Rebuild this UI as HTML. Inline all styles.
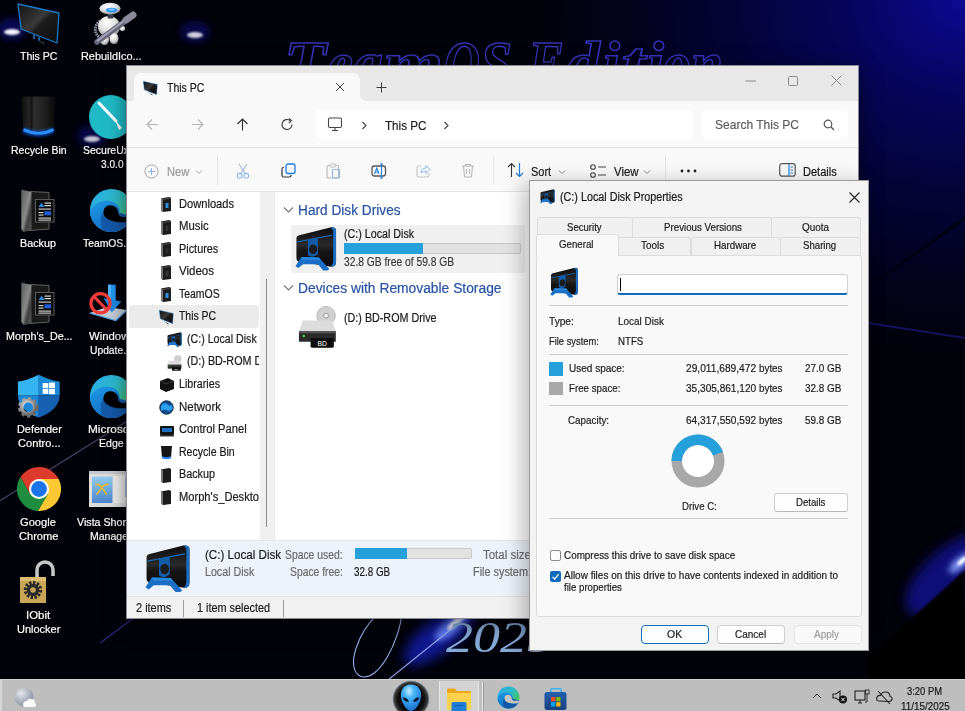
<!DOCTYPE html><html><head><meta charset="utf-8"><style>
*{margin:0;padding:0;box-sizing:border-box}
html,body{width:965px;height:711px;overflow:hidden;background:#02020a}
body{position:relative;font-family:"Liberation Sans",sans-serif}
.t{position:absolute;white-space:nowrap;transform-origin:0 0;-webkit-text-stroke:0.2px currentColor}
.a{position:absolute}
svg{position:absolute;overflow:visible}
.dl{color:#fff;text-shadow:0 0 2px #000,1px 1px 1px #000}
</style></head><body><div class="a" style="left:0;top:0;width:965px;height:711px;background:radial-gradient(ellipse 430px 360px at 965px 0px,#0c0a92 0%,#09077a 12%,#060560 25%,#05044a 40%,#040332 58%,#03021c 78%,rgba(2,2,10,0) 100%),#02020a"></div>
<svg style="left:0px;top:0px;" width="965" height="711" viewBox="0 0 965 711"><defs>
<radialGradient id="glowW" cx="50%" cy="50%" r="50%"><stop offset="0" stop-color="#f4f6ff"/><stop offset=".35" stop-color="#8fa0ff" stop-opacity=".8"/><stop offset="1" stop-color="#1010a0" stop-opacity="0"/></radialGradient>
<radialGradient id="glowB" cx="50%" cy="50%" r="50%"><stop offset="0" stop-color="#ffffff"/><stop offset=".25" stop-color="#6b8cff"/><stop offset=".6" stop-color="#1a2fd0" stop-opacity=".7"/><stop offset="1" stop-color="#0a0a60" stop-opacity="0"/></radialGradient>
</defs><defs><filter id="bl3" x="-1" y="-1" width="3" height="3"><feGaussianBlur stdDeviation="3"/></filter><filter id="bl1" x="-1" y="-1" width="3" height="3"><feGaussianBlur stdDeviation="1.2"/></filter><filter id="bl6" x="-1" y="-1" width="3" height="3"><feGaussianBlur stdDeviation="6"/></filter></defs><ellipse cx="195" cy="32" rx="15" ry="11" fill="#10108c" opacity="0.4675" filter="url(#bl3)"/><ellipse cx="195" cy="35" rx="8" ry="3" fill="#f6f6ff" opacity="0.85" filter="url(#bl1)"/><ellipse cx="12" cy="29" rx="15" ry="11" fill="#10108c" opacity="0.55" filter="url(#bl3)"/><ellipse cx="12" cy="32" rx="8" ry="3" fill="#f6f6ff" opacity="1" filter="url(#bl1)"/><ellipse cx="92" cy="136" rx="15" ry="11" fill="#10108c" opacity="0.44000000000000006" filter="url(#bl3)"/><ellipse cx="92" cy="139" rx="8" ry="3" fill="#f6f6ff" opacity="0.8" filter="url(#bl1)"/><g font-family="Liberation Serif" font-style="italic" font-weight="bold" font-size="64" fill="none" stroke="#3434b4" stroke-width="1.5"><text x="284" y="85" textLength="42" lengthAdjust="spacingAndGlyphs">T</text><text x="327" y="85" textLength="26" lengthAdjust="spacingAndGlyphs">e</text><text x="353" y="85" textLength="30" lengthAdjust="spacingAndGlyphs">a</text><text x="383" y="85" textLength="60" lengthAdjust="spacingAndGlyphs">m</text><text x="444" y="85" textLength="36" lengthAdjust="spacingAndGlyphs">O</text><text x="480" y="85" textLength="32" lengthAdjust="spacingAndGlyphs">S</text><text x="528" y="85" textLength="36" lengthAdjust="spacingAndGlyphs">E</text><text x="566" y="85" textLength="34" lengthAdjust="spacingAndGlyphs">d</text><text x="602" y="85" textLength="18" lengthAdjust="spacingAndGlyphs">i</text><text x="621" y="85" textLength="24" lengthAdjust="spacingAndGlyphs">t</text><text x="646" y="85" textLength="18" lengthAdjust="spacingAndGlyphs">i</text><text x="663" y="85" textLength="28" lengthAdjust="spacingAndGlyphs">o</text><text x="691" y="85" textLength="32" lengthAdjust="spacingAndGlyphs">n</text></g><path d="M0 500.7 L300 313" stroke="#4a4a66" stroke-width="1.2" opacity=".9"/><path d="M100 643 L135 617" stroke="#2a2a80" stroke-width="1.2"/><path d="M868 288 L965 218" stroke="#020214" stroke-width="3"/><path d="M868 323 L965 338" stroke="#1a1670" stroke-width="2" opacity=".8"/><ellipse cx="440" cy="634" rx="45" ry="17" fill="#1424c8" opacity=".7" filter="url(#bl6)" transform="rotate(-40 440 634)"/><ellipse cx="452" cy="626" rx="22" ry="7" fill="#6a88ff" opacity=".9" filter="url(#bl3)" transform="rotate(-40 452 626)"/><ellipse cx="455" cy="623" rx="10" ry="3" fill="#f0f4ff" opacity=".9" filter="url(#bl1)" transform="rotate(-40 455 623)"/><path d="M388 680 L470 614" stroke="#a8b8ff" stroke-width="1.1" opacity=".85"/><path d="M378 614 C 358 632, 345 668, 360 676 C 378 684, 400 640, 402 612" fill="none" stroke="#8fb0e0" stroke-width="1.1"/><text x="446" y="652" font-family="Liberation Serif" font-style="italic" font-size="44" fill="#86aad6" textLength="108" lengthAdjust="spacingAndGlyphs">2025</text><ellipse cx="950" cy="575" rx="55" ry="26" fill="#1616c0" opacity=".6" filter="url(#bl6)" transform="rotate(-42 950 575)"/><ellipse cx="960" cy="563" rx="14" ry="5" fill="#8aa0ff" filter="url(#bl3)" transform="rotate(-42 960 563)"/><ellipse cx="962" cy="561" rx="6" ry="2" fill="#ffffff" filter="url(#bl1)" transform="rotate(-42 962 561)"/><path d="M868 658 L965 570 L965 711 L868 711 Z" fill="#010106" filter="url(#bl1)"/></svg>
<svg style="left:17px;top:3px;" width="44" height="44" viewBox="0 0 44 44"><g transform="scale(1.0)"><defs><linearGradient id="scr173" x1="0" y1="0" x2="1" y2="1"><stop offset="0" stop-color="#111"/><stop offset=".45" stop-color="#3a3a3a"/><stop offset=".55" stop-color="#1c1c1c"/><stop offset="1" stop-color="#0c0c0c"/></linearGradient></defs><path d="M1 1 L42 10 L40 40 L4 26 Z" fill="url(#scr173)" stroke="#1a78c8" stroke-width="1.3" stroke-linejoin="round"/><path d="M17 32 L17 36 M22 34 L22 38" stroke="#1f86cf" stroke-width="1.4"/><path d="M22 38 L28 41" stroke="#222" stroke-width="2"/></g></svg><svg style="left:88px;top:0px;" width="52" height="48" viewBox="0 0 52 48">
<defs><radialGradient id="rw" cx="40%" cy="30%" r="75%"><stop offset="0" stop-color="#ffffff"/><stop offset=".55" stop-color="#dedede"/><stop offset="1" stop-color="#8a8a8a"/></radialGradient></defs>
<path d="M12 21 C6 25 6 33 11 37" stroke="#8a92a0" stroke-width="3" fill="none" stroke-dasharray="1.6 .8"/>
<ellipse cx="21" cy="26.5" rx="11" ry="10.5" fill="url(#rw)"/>
<rect x="19.5" y="14" width="6" height="4.5" rx="1.5" fill="#3a3a48"/>
<ellipse cx="22" cy="8.6" rx="10.6" ry="5.9" fill="url(#rw)"/>
<ellipse cx="23.5" cy="10" rx="5.5" ry="2.3" fill="#1e90ff"/>
<ellipse cx="23.5" cy="9.6" rx="3.5" ry="1.1" fill="#7cc8ff"/>
<circle cx="34.5" cy="28.5" r="2.6" fill="url(#rw)"/>
<ellipse cx="16.5" cy="39.5" rx="4.5" ry="5.5" fill="url(#rw)"/>
<ellipse cx="26" cy="38.5" rx="4.5" ry="5.5" fill="url(#rw)"/>
<path d="M9 42 L44 16" stroke="#66667a" stroke-width="5.5" stroke-linecap="round"/>
<path d="M9 41 L44 15" stroke="#a4a4ba" stroke-width="2"/>
<path d="M38 20 L45 15" stroke="#8a8a9c" stroke-width="7" stroke-linecap="round"/>
</svg><svg style="left:21px;top:96px;" width="36" height="42" viewBox="0 0 36 42">
<defs><linearGradient id="rb" x1="0" x2="1"><stop offset="0" stop-color="#0e0e0e"/><stop offset=".22" stop-color="#262626"/><stop offset=".3" stop-color="#141414"/><stop offset=".36" stop-color="#2e2e2e"/><stop offset=".65" stop-color="#222"/><stop offset="1" stop-color="#080808"/></linearGradient>
<filter id="rbg" x="-.5" y="-2" width="2" height="5"><feGaussianBlur stdDeviation="1.6"/></filter></defs>
<path d="M0.5 0.5 L34.5 0.5 L33 32 Q17.5 40 2 32 Z" fill="url(#rb)"/>
<path d="M2.5 34 Q17.5 41.5 32.5 34" stroke="#1060e0" stroke-width="5" fill="none" filter="url(#rbg)" opacity=".8"/>
<path d="M2.5 33.5 Q17.5 41 32.5 33.5" stroke="#2a90ff" stroke-width="2.6" fill="none"/>
</svg><svg style="left:89px;top:95px;" width="44" height="44" viewBox="0 0 44 44">
<circle cx="22" cy="22" r="22" fill="#1fbac6"/>
<path d="M10 8 L27 26" stroke="#fff" stroke-width="3" stroke-linecap="round"/>
<path d="M26 25 L33 33 L30 35 Z" fill="#fff"/>
</svg><svg style="left:20px;top:189px;" width="36" height="44" viewBox="0 0 36 44">
<defs><linearGradient id="bk189" x1="0" y1="0" x2="1" y2="1"><stop offset="0" stop-color="#5a5a5a"/><stop offset=".5" stop-color="#8a8a8a"/><stop offset=".7" stop-color="#3e3e3e"/><stop offset="1" stop-color="#5c5c5c"/></linearGradient></defs>
<path d="M10 2.5 L29 3.5 L29 40 L10 41.5 Z" fill="#1a1a1a" stroke="#606060" stroke-width="1"/>
<path d="M1.3 0.5 L11.5 3 L11.5 41.5 L3.5 43 L1.3 40 Z" fill="url(#bk189)"/>
<rect x="15.5" y="10.5" width="18.5" height="22.5" fill="#0c0c0c" stroke="#5a5a5a" stroke-width="1"/>
<path d="M18.5 18 L21.5 13.8 L24.5 18 Z" fill="#2d88e6"/>
<rect x="24.5" y="13.5" width="6.5" height="1.2" fill="#d8d8d8"/><rect x="24.5" y="16" width="6.5" height="1.2" fill="#d8d8d8"/>
<rect x="18.5" y="19.5" width="12.5" height="1.2" fill="#c8c8c8"/>
<rect x="18.5" y="23" width="5" height="1.2" fill="#c8c8c8"/><rect x="18.5" y="25.5" width="5" height="1.2" fill="#c8c8c8"/>
<rect x="24.5" y="22.3" width="6.5" height="4" fill="#1f5ad8"/>
<rect x="18.5" y="28.5" width="12.5" height="1.2" fill="#c8c8c8"/><rect x="18.5" y="30.5" width="12.5" height="1.2" fill="#c8c8c8"/>
</svg><svg style="left:20px;top:282px;" width="36" height="44" viewBox="0 0 36 44">
<defs><linearGradient id="bk282" x1="0" y1="0" x2="1" y2="1"><stop offset="0" stop-color="#5a5a5a"/><stop offset=".5" stop-color="#8a8a8a"/><stop offset=".7" stop-color="#3e3e3e"/><stop offset="1" stop-color="#5c5c5c"/></linearGradient></defs>
<path d="M10 2.5 L29 3.5 L29 40 L10 41.5 Z" fill="#1a1a1a" stroke="#606060" stroke-width="1"/>
<path d="M1.3 0.5 L11.5 3 L11.5 41.5 L3.5 43 L1.3 40 Z" fill="url(#bk282)"/>
<rect x="15.5" y="10.5" width="18.5" height="22.5" fill="#0c0c0c" stroke="#5a5a5a" stroke-width="1"/>
<path d="M18.5 18 L21.5 13.8 L24.5 18 Z" fill="#2d88e6"/>
<rect x="24.5" y="13.5" width="6.5" height="1.2" fill="#d8d8d8"/><rect x="24.5" y="16" width="6.5" height="1.2" fill="#d8d8d8"/>
<rect x="18.5" y="19.5" width="12.5" height="1.2" fill="#c8c8c8"/>
<rect x="18.5" y="23" width="5" height="1.2" fill="#c8c8c8"/><rect x="18.5" y="25.5" width="5" height="1.2" fill="#c8c8c8"/>
<rect x="24.5" y="22.3" width="6.5" height="4" fill="#1f5ad8"/>
<rect x="18.5" y="28.5" width="12.5" height="1.2" fill="#c8c8c8"/><rect x="18.5" y="30.5" width="12.5" height="1.2" fill="#c8c8c8"/>
</svg><svg style="left:89px;top:188px;" width="45" height="45" viewBox="0 0 45 45">
<defs>
<linearGradient id="et1187" x1="0" y1="0" x2="1" y2=".7"><stop offset="0" stop-color="#2aa8ec"/><stop offset=".55" stop-color="#2cbcc8"/><stop offset="1" stop-color="#52c746"/></linearGradient>
<linearGradient id="eb1187" x1="0" y1="0" x2=".6" y2="1"><stop offset="0" stop-color="#1f9ae6"/><stop offset="1" stop-color="#0f66c0"/></linearGradient>
<clipPath id="ec1187"><circle cx="24" cy="24" r="23"/></clipPath>
</defs>
<g transform="scale(0.9375)"><g clip-path="url(#ec1187)">
<rect x="0" y="0" width="48" height="48" fill="url(#et1187)"/>
<path d="M0 29 C2 16 16 11 26 15 C32 18 34 24 32 28 L48 31 L48 48 L0 48 Z" fill="url(#eb1187)"/>
<path d="M16 48 C10 38 12 25 21 20 C26 18 31 21 32 26 L48 31 L48 48 Z" fill="#1458a8"/>
<path d="M22.5 18.5 C27.5 18.5 31 22 31 26 C31 29 34 31 38 31 L48 30.5 L48 36 L38 36.5 C26 37 15.5 33 15.5 26 C15.5 21.5 18.5 18.5 22.5 18.5 Z" fill="#000"/>
</g></g></svg><svg style="left:89px;top:374px;" width="45" height="45" viewBox="0 0 45 45">
<defs>
<linearGradient id="et1745" x1="0" y1="0" x2="1" y2=".7"><stop offset="0" stop-color="#2aa8ec"/><stop offset=".55" stop-color="#2cbcc8"/><stop offset="1" stop-color="#52c746"/></linearGradient>
<linearGradient id="eb1745" x1="0" y1="0" x2=".6" y2="1"><stop offset="0" stop-color="#1f9ae6"/><stop offset="1" stop-color="#0f66c0"/></linearGradient>
<clipPath id="ec1745"><circle cx="24" cy="24" r="23"/></clipPath>
</defs>
<g transform="scale(0.9375)"><g clip-path="url(#ec1745)">
<rect x="0" y="0" width="48" height="48" fill="url(#et1745)"/>
<path d="M0 29 C2 16 16 11 26 15 C32 18 34 24 32 28 L48 31 L48 48 L0 48 Z" fill="url(#eb1745)"/>
<path d="M16 48 C10 38 12 25 21 20 C26 18 31 21 32 26 L48 31 L48 48 Z" fill="#1458a8"/>
<path d="M22.5 18.5 C27.5 18.5 31 22 31 26 C31 29 34 31 38 31 L48 30.5 L48 36 L38 36.5 C26 37 15.5 33 15.5 26 C15.5 21.5 18.5 18.5 22.5 18.5 Z" fill="#000"/>
</g></g></svg><svg style="left:88px;top:284px;" width="42" height="40" viewBox="0 0 42 40">
<path d="M1.7 29 L19 23 L39 26 L27.7 36.5 Z" fill="#c2ccd6"/>
<path d="M1.7 29 L27.7 36.5 L39 26" stroke="#5aa8e8" stroke-width="1.3" fill="none"/>
<rect x="20" y="0.7" width="7.7" height="16" fill="#2196f0"/>
<rect x="20" y="0.7" width="3" height="16" fill="#52b4f8"/>
<path d="M15.6 14.2 L33.4 17.6 L23.7 28.4 Z" fill="#1c8ae6"/>
<circle cx="12.5" cy="19.3" r="9.6" fill="none" stroke="#f03a3a" stroke-width="3.2"/>
<path d="M6 12.5 L19 26" stroke="#f03a3a" stroke-width="3.2"/>
</svg><svg style="left:17px;top:373px;" width="46" height="48" viewBox="0 0 46 48">
<defs><clipPath id="shc"><path d="M0.9 8.4 C8 8 14 5 21.8 1.7 C29.5 5 35.5 8 42.7 8.4 L42.7 22 C42.7 33 33 41 21.8 44.6 C10.5 41 0.9 33 0.9 22 Z"/></clipPath>
<radialGradient id="gear" cx="40%" cy="35%" r="70%"><stop offset="0" stop-color="#f4f4f4"/><stop offset=".6" stop-color="#a8a8a8"/><stop offset="1" stop-color="#6a6a6a"/></radialGradient></defs>
<g clip-path="url(#shc)">
<rect x="0" y="0" width="21.8" height="22.6" fill="#34b4f0"/><rect x="21.8" y="0" width="22" height="22.6" fill="#1a8ad8"/>
<rect x="0" y="22.6" width="21.8" height="24" fill="#1e88d8"/><rect x="21.8" y="22.6" width="22" height="24" fill="#1560b0"/>
</g>
<rect x="25.7" y="10" width="5.6" height="5" fill="#fff"/><rect x="32.1" y="9.6" width="5.9" height="5.4" fill="#fff"/>
<rect x="25.7" y="15.8" width="5.6" height="5" fill="#fff"/><rect x="32.1" y="15.8" width="5.9" height="5.4" fill="#fff"/>
<g transform="translate(11.2 34.4)"><circle r="8" fill="none" stroke="url(#gear)" stroke-width="4.5" stroke-dasharray="3 2.3"/><circle r="6.8" fill="none" stroke="url(#gear)" stroke-width="4"/><circle r="3.4" fill="#1e88d8"/></g>
</svg><svg style="left:15.5px;top:466px;" width="46" height="46" viewBox="0 0 46 46"><g transform="scale(0.9583333333333334)"><path d="M24.00 13.50 L44.46 13.50 A23 23 0 0 1 22.86 46.97 L33.09 29.25 L24 24 Z" fill="#fcc934"/><path d="M33.09 29.25 L22.86 46.97 A23 23 0 0 1 4.68 11.53 L14.91 29.25 L24 24 Z" fill="#1e8e3e"/><path d="M14.91 29.25 L4.68 11.53 A23 23 0 0 1 44.46 13.50 L24.00 13.50 L24 24 Z" fill="#db3a2c"/><circle cx="24" cy="24" r="10.5" fill="#fff"/><circle cx="24" cy="24" r="8.3" fill="#1a73e8"/></g></svg><svg style="left:89px;top:471px;" width="40" height="36" viewBox="0 0 40 36">
<defs><linearGradient id="vsb" x1="0" y1="0" x2="0" y2="1"><stop offset="0" stop-color="#92ccf0"/><stop offset="1" stop-color="#4a86cc"/></linearGradient></defs>
<rect x="0" y="0" width="40" height="36" fill="#dcdcdc"/>
<rect x="0" y="0" width="40" height="3" fill="#c4c8cc"/>
<rect x="3" y="5.6" width="20.4" height="26.4" fill="url(#vsb)"/>
<rect x="24.5" y="5" width="12" height="27" fill="#ececec"/>
<rect x="36.5" y="6" width="3" height="20" fill="#5a8ad0"/>
<path d="M6.2 13.4 Q12 13.5 14 18 L17.8 23.6 M19.6 13.4 Q14 13.5 11.8 18 L7.6 23.6" stroke="#e8b830" stroke-width="1.6" fill="none"/>
</svg><svg style="left:19px;top:562px;" width="40" height="42" viewBox="0 0 40 42">
<path d="M18 16 L18 8 A8 8 0 0 1 34 8 L34 14" fill="none" stroke="#c8c8c8" stroke-width="3.5"/>
<rect x="1" y="15" width="26" height="26" fill="#c9a655"/>
<rect x="1" y="15" width="26" height="4" fill="#dcbc6e"/>
<g transform="translate(14 28)"><circle r="7.5" fill="none" stroke="#2a2a2a" stroke-width="3.4" stroke-dasharray="2.4 1.5"/><circle r="6.2" fill="#2a2a2a"/><circle r="2.8" fill="#c9a655"/></g>
</svg>
<div class="t" style="left:20.2px;top:50.0px;font-size:11.5px;line-height:12px;color:#ffffff;transform:scaleX(0.914);text-shadow:0 0 2px #000,1px 1px 1px #000;">This PC</div>
<div class="t" style="left:81.3px;top:50.0px;font-size:11.5px;line-height:12px;color:#ffffff;transform:scaleX(0.948);text-shadow:0 0 2px #000,1px 1px 1px #000;">RebuildIco...</div>
<div class="t" style="left:10.6px;top:143.7px;font-size:11.5px;line-height:12px;color:#ffffff;transform:scaleX(0.917);text-shadow:0 0 2px #000,1px 1px 1px #000;">Recycle Bin</div>
<div class="t" style="left:82.8px;top:143.7px;font-size:11.5px;line-height:12px;color:#ffffff;transform:scaleX(0.911);text-shadow:0 0 2px #000,1px 1px 1px #000;">SecureUx</div>
<div class="t" style="left:100.8px;top:157.8px;font-size:11.5px;line-height:12px;color:#ffffff;transform:scaleX(0.880);text-shadow:0 0 2px #000,1px 1px 1px #000;">3.0.0</div>
<div class="t" style="left:20.3px;top:237.0px;font-size:11.5px;line-height:12px;color:#ffffff;transform:scaleX(0.936);text-shadow:0 0 2px #000,1px 1px 1px #000;">Backup</div>
<div class="t" style="left:82.8px;top:237.0px;font-size:11.5px;line-height:12px;color:#ffffff;transform:scaleX(0.900);text-shadow:0 0 2px #000,1px 1px 1px #000;">TeamOS.:</div>
<div class="t" style="left:5.6px;top:330.0px;font-size:11.5px;line-height:12px;color:#ffffff;transform:scaleX(0.935);text-shadow:0 0 2px #000,1px 1px 1px #000;">Morph's_De...</div>
<div class="t" style="left:88.6px;top:330.0px;font-size:11.5px;line-height:12px;color:#ffffff;transform:scaleX(0.986);text-shadow:0 0 2px #000,1px 1px 1px #000;">Windows</div>
<div class="t" style="left:89.9px;top:344.2px;font-size:11.5px;line-height:12px;color:#ffffff;transform:scaleX(0.894);text-shadow:0 0 2px #000,1px 1px 1px #000;">Update.</div>
<div class="t" style="left:16.5px;top:422.7px;font-size:11.5px;line-height:12px;color:#ffffff;transform:scaleX(0.947);text-shadow:0 0 2px #000,1px 1px 1px #000;">Defender</div>
<div class="t" style="left:17.7px;top:436.8px;font-size:11.5px;line-height:12px;color:#ffffff;transform:scaleX(0.966);text-shadow:0 0 2px #000,1px 1px 1px #000;">Contro...</div>
<div class="t" style="left:87.8px;top:422.7px;font-size:11.5px;line-height:12px;color:#ffffff;transform:scaleX(1.029);text-shadow:0 0 2px #000,1px 1px 1px #000;">Microsoft</div>
<div class="t" style="left:98.7px;top:436.8px;font-size:11.5px;line-height:12px;color:#ffffff;transform:scaleX(0.916);text-shadow:0 0 2px #000,1px 1px 1px #000;">Edge</div>
<div class="t" style="left:20.3px;top:515.8px;font-size:11.5px;line-height:12px;color:#ffffff;transform:scaleX(0.968);text-shadow:0 0 2px #000,1px 1px 1px #000;">Google</div>
<div class="t" style="left:19.1px;top:530.3px;font-size:11.5px;line-height:12px;color:#ffffff;transform:scaleX(0.963);text-shadow:0 0 2px #000,1px 1px 1px #000;">Chrome</div>
<div class="t" style="left:77.2px;top:515.8px;font-size:11.5px;line-height:12px;color:#ffffff;transform:scaleX(0.928);text-shadow:0 0 2px #000,1px 1px 1px #000;">Vista Short</div>
<div class="t" style="left:90.0px;top:530.3px;font-size:11.5px;line-height:12px;color:#ffffff;transform:scaleX(0.914);text-shadow:0 0 2px #000,1px 1px 1px #000;">Manage</div>
<div class="t" style="left:25.9px;top:609.0px;font-size:11.5px;line-height:12px;color:#ffffff;transform:scaleX(0.992);text-shadow:0 0 2px #000,1px 1px 1px #000;">IObit</div>
<div class="t" style="left:16.9px;top:622.5px;font-size:11.5px;line-height:12px;color:#ffffff;transform:scaleX(0.956);text-shadow:0 0 2px #000,1px 1px 1px #000;">Unlocker</div>
<div class="a" style="left:126px;top:65px;width:733px;height:554px;background:#8a8a94;box-shadow:0 4px 18px rgba(0,0,0,.5)"></div><div class="a" style="left:127px;top:66px;width:731px;height:35px;background:#e8e8e8"></div><div class="a" style="left:134px;top:73px;width:226px;height:28px;background:#f9f9f9;border-radius:7px 7px 0 0"></div><div class="a" style="left:127px;top:101px;width:731px;height:47px;background:#f9f9f9"></div><div class="a" style="left:360px;top:94px;width:7px;height:7px;background:#f9f9f9"></div><div class="a" style="left:360px;top:94px;width:7px;height:7px;background:#e8e8e8;border-bottom-left-radius:7px"></div><div class="a" style="left:127px;top:147px;width:731px;height:1px;background:#e3e3e3"></div><div class="a" style="left:127px;top:148px;width:731px;height:44px;background:#f9f9f9"></div><div class="a" style="left:127px;top:191px;width:731px;height:1px;background:#e3e3e3"></div><div class="a" style="left:316px;top:110px;width:377px;height:29px;background:#ffffff;border-radius:5px"></div><div class="a" style="left:701.5px;top:110px;width:146.5px;height:29px;background:#ffffff;border-radius:5px"></div><div class="a" style="left:127px;top:192px;width:133px;height:348px;background:#ffffff"></div><div class="a" style="left:260px;top:192px;width:14px;height:348px;background:#f0f0f0"></div><div class="a" style="left:266px;top:279px;width:1.2px;height:248px;background:#8a8a8a"></div><div class="a" style="left:274px;top:192px;width:584px;height:348px;background:#ffffff"></div><div class="a" style="left:127px;top:540px;width:731px;height:56px;background:#eef2fb;border-top:1px solid #dfe5f0"></div><div class="a" style="left:127px;top:596px;width:731px;height:22px;background:#f1f1f1;border-top:1px solid #e2e2e2"></div><div class="a" style="left:183px;top:600px;width:1px;height:17px;background:#9a9a9a"></div><div class="a" style="left:282.5px;top:600px;width:1px;height:17px;background:#9a9a9a"></div><svg style="left:143px;top:81px;" width="44" height="44" viewBox="0 0 44 44"><g transform="scale(0.34)"><defs><linearGradient id="scr1511" x1="0" y1="0" x2="1" y2="1"><stop offset="0" stop-color="#111"/><stop offset=".45" stop-color="#3a3a3a"/><stop offset=".55" stop-color="#1c1c1c"/><stop offset="1" stop-color="#0c0c0c"/></linearGradient></defs><path d="M1 1 L42 10 L40 40 L4 26 Z" fill="url(#scr1511)" stroke="#1a78c8" stroke-width="1.3" stroke-linejoin="round"/><path d="M17 32 L17 36 M22 34 L22 38" stroke="#1f86cf" stroke-width="1.4"/><path d="M22 38 L28 41" stroke="#222" stroke-width="2"/></g></svg><div class="t" style="left:167.2px;top:81.0px;font-size:12px;line-height:14px;color:#1a1a1a;transform:scaleX(0.874);">This PC</div><svg style="left:335px;top:82px;" width="10" height="10" viewBox="0 0 10 10"><path d="M1 1 L9 9 M9 1 L1 9" stroke="#3c3c3c" stroke-width="1"/></svg><svg style="left:376px;top:82px;" width="11" height="11" viewBox="0 0 11 11"><path d="M5.5 0.5 L5.5 10.5 M0.5 5.5 L10.5 5.5" stroke="#3c3c3c" stroke-width="1"/></svg><svg style="left:745px;top:75px;" width="12" height="12" viewBox="0 0 12 12"><path d="M0.5 6 L11 6" stroke="#8a8a8a" stroke-width="1"/></svg><svg style="left:788px;top:76px;" width="10" height="10" viewBox="0 0 10 10"><rect x="0.5" y="0.5" width="9" height="9" fill="none" stroke="#8a8a8a" stroke-width="1" rx="1"/></svg><svg style="left:831px;top:75px;" width="11" height="11" viewBox="0 0 11 11"><path d="M0.5 0.5 L10.5 10.5 M10.5 0.5 L0.5 10.5" stroke="#8a8a8a" stroke-width="1"/></svg><svg style="left:146px;top:118px;" width="13" height="13" viewBox="0 0 13 13"><path d="M12 6.5 L1 6.5 M6 1.5 L1 6.5 L6 11.5" stroke="#b5b5b5" stroke-width="1.1" fill="none"/></svg><svg style="left:191px;top:118px;" width="13" height="13" viewBox="0 0 13 13"><path d="M1 6.5 L12 6.5 M7 1.5 L12 6.5 L7 11.5" stroke="#b5b5b5" stroke-width="1.1" fill="none"/></svg><svg style="left:235.5px;top:118px;" width="13" height="13" viewBox="0 0 13 13"><path d="M6.5 12.5 L6.5 1 M1.5 6 L6.5 1 L11.5 6" stroke="#2a2a2a" stroke-width="1.1" fill="none"/></svg><svg style="left:281px;top:118px;" width="13" height="13" viewBox="0 0 13 13"><path d="M11 6.5 A5 5 0 1 1 9 2.5" stroke="#3a3a3a" stroke-width="1.1" fill="none"/><path d="M8 0.5 L10.5 2.5 L8 5" stroke="#3a3a3a" stroke-width="1.1" fill="none"/></svg><svg style="left:327px;top:117px;" width="17" height="15" viewBox="0 0 17 15"><rect x="1.5" y="1" width="13" height="9.5" rx="1.5" fill="none" stroke="#444" stroke-width="1.1"/><path d="M5 13.5 L11 13.5 M8 10.5 L8 13.5" stroke="#444" stroke-width="1.1"/></svg><svg style="left:361px;top:121px;" width="7" height="9" viewBox="0 0 7 9"><path d="M1.5 1 L5 4.5 L1.5 8" stroke="#444" stroke-width="1.1" fill="none"/></svg><div class="t" style="left:384.6px;top:117.6px;font-size:13.5px;line-height:15px;color:#1a1a1a;transform:scaleX(0.862);">This PC</div><svg style="left:443px;top:121px;" width="7" height="9" viewBox="0 0 7 9"><path d="M1.5 1 L5 4.5 L1.5 8" stroke="#444" stroke-width="1.1" fill="none"/></svg><div class="t" style="left:715.0px;top:117.3px;font-size:13.5px;line-height:15px;color:#5d5d5d;transform:scaleX(0.891);">Search This PC</div><svg style="left:823px;top:119px;" width="12" height="12" viewBox="0 0 12 12"><circle cx="5" cy="5" r="3.8" fill="none" stroke="#555" stroke-width="1.2"/><path d="M7.8 7.8 L11 11" stroke="#555" stroke-width="1.3"/></svg><svg style="left:143.5px;top:163.5px;" width="15" height="15" viewBox="0 0 15 15"><circle cx="7.5" cy="7.5" r="6.6" fill="none" stroke="#a8a8a8" stroke-width="1"/><path d="M7.5 4 L7.5 11 M4 7.5 L11 7.5" stroke="#8ab6e8" stroke-width="1"/></svg><div class="t" style="left:166.9px;top:164.5px;font-size:12px;line-height:14px;color:#9a9a9a;transform:scaleX(0.921);">New</div><svg style="left:195px;top:169px;" width="8" height="6" viewBox="0 0 8 6"><path d="M1 1.5 L4 4.5 L7 1.5" stroke="#a8a8a8" stroke-width="1" fill="none"/></svg><div class="a" style="left:217px;top:156px;width:1px;height:29px;background:#e3e3e3"></div><svg style="left:235.5px;top:163px;" width="14" height="16" viewBox="0 0 14 16"><path d="M3 1 L9.5 11 M11 1 L4.5 11" stroke="#9ab8dc" stroke-width="1.1"/><circle cx="3.7" cy="12.8" r="2.4" fill="none" stroke="#8cb8ea" stroke-width="1.1"/><circle cx="10.3" cy="12.8" r="2.4" fill="none" stroke="#8cb8ea" stroke-width="1.1"/></svg><svg style="left:280.5px;top:163px;" width="15" height="15" viewBox="0 0 15 15"><path d="M3 4.5 L2.5 4.5 Q1 4.5 1 6 L1 12.5 Q1 14 2.5 14 L8.5 14 Q10 14 10 12.5 L10 12" fill="none" stroke="#333" stroke-width="1.2"/><rect x="5" y="1" width="9" height="9.5" rx="2" fill="none" stroke="#1a7de0" stroke-width="1.3"/></svg><svg style="left:325.5px;top:162.5px;" width="15" height="16" viewBox="0 0 15 16"><path d="M4 2.5 L2.5 2.5 Q1 2.5 1 4 L1 14 Q1 15 2.5 15 L11 15 Q12.5 15 12.5 14 L12.5 4 Q12.5 2.5 11 2.5 L9.5 2.5" fill="none" stroke="#b8b8b8" stroke-width="1.1"/><rect x="4" y="1" width="5.5" height="3" rx="1" fill="none" stroke="#b8b8b8"/><rect x="6.5" y="6.5" width="7" height="8.5" rx="1" fill="none" stroke="#8ab8e8" stroke-width="1.1"/></svg><svg style="left:370.5px;top:162.5px;" width="16" height="16" viewBox="0 0 16 16"><rect x="1" y="3" width="13.5" height="10" rx="2.5" fill="none" stroke="#555" stroke-width="1.3"/><path d="M3.5 11 L5.8 5 L8 11 M4.3 9 L7.3 9" stroke="#1f7fdc" stroke-width="1.1" fill="none"/><path d="M10.5 1 L10.5 15 M9 1 L12 1 M9 15 L12 15" stroke="#1f7fdc" stroke-width="1.1"/></svg><svg style="left:415.5px;top:163px;" width="15" height="15" viewBox="0 0 15 15"><path d="M5 3 L3 3 Q1 3 1 5 L1 12 Q1 14 3 14 L11 14 Q13 14 13 12 L13 10" fill="none" stroke="#c4c4c4" stroke-width="1.1"/><path d="M5 10 Q5 5 10 5 L10 2.5 L14 6.5 L10 10.5 L10 8 Q7 8 5 10 Z" fill="none" stroke="#8ab8e8" stroke-width="1"/></svg><svg style="left:461px;top:163px;" width="14" height="15" viewBox="0 0 14 15"><path d="M1 3 L13 3 M4.5 3 L4.5 1.5 L9.5 1.5 L9.5 3 M2.5 3 L3.5 13.5 Q3.5 14 4.5 14 L9.5 14 Q10.5 14 10.5 13.5 L11.5 3 M5.5 6 L5.5 11 M8.5 6 L8.5 11" fill="none" stroke="#b8b8b8" stroke-width="1.1"/></svg><div class="a" style="left:492.5px;top:156px;width:1px;height:29px;background:#e3e3e3"></div><svg style="left:507px;top:162px;" width="18" height="16" viewBox="0 0 18 16"><path d="M4.5 15 L4.5 1.5 M1 5 L4.5 1.5 L8 5" stroke="#333" stroke-width="1.1" fill="none"/><path d="M12.5 1 L12.5 14.5 M9 11 L12.5 14.5 L16 11" stroke="#1f7fdc" stroke-width="1.2" fill="none"/></svg><div class="t" style="left:531.3px;top:164.5px;font-size:12px;line-height:14px;color:#1a1a1a;transform:scaleX(0.913);">Sort</div><svg style="left:557.5px;top:169px;" width="8" height="6" viewBox="0 0 8 6"><path d="M1 1.5 L4 4.5 L7 1.5" stroke="#888" stroke-width="1" fill="none"/></svg><svg style="left:590px;top:164px;" width="17" height="14" viewBox="0 0 17 14"><circle cx="3" cy="3" r="2.3" fill="none" stroke="#444" stroke-width="1.1"/><circle cx="3" cy="11" r="2.3" fill="none" stroke="#444" stroke-width="1.1"/><path d="M8 3 L16 3 M8 11 L16 11" stroke="#444" stroke-width="1.1"/></svg><div class="t" style="left:613.5px;top:164.5px;font-size:12px;line-height:14px;color:#1a1a1a;transform:scaleX(0.950);">View</div><svg style="left:643px;top:169px;" width="8" height="6" viewBox="0 0 8 6"><path d="M1 1.5 L4 4.5 L7 1.5" stroke="#888" stroke-width="1" fill="none"/></svg><div class="a" style="left:665px;top:156px;width:1px;height:29px;background:#e3e3e3"></div><svg style="left:680px;top:169px;" width="18" height="4" viewBox="0 0 18 4"><circle cx="2" cy="2" r="1.4" fill="#222"/><circle cx="8.5" cy="2" r="1.4" fill="#222"/><circle cx="15" cy="2" r="1.4" fill="#222"/></svg><svg style="left:779px;top:163px;" width="17" height="14" viewBox="0 0 17 14"><rect x="0.7" y="0.7" width="15.5" height="12.5" rx="2.5" fill="none" stroke="#555" stroke-width="1.2"/><path d="M10 0.7 L10 13.2" stroke="#1f7fdc" stroke-width="1.2"/><path d="M11.5 4 L14 4 M11.5 7 L14 7 M11.5 10 L14 10" stroke="#1f7fdc" stroke-width="1"/></svg><div class="t" style="left:803.0px;top:164.5px;font-size:12px;line-height:14px;color:#1a1a1a;transform:scaleX(0.919);">Details</div><div class="a" style="left:129px;top:305px;width:130px;height:22.8px;background:#ebebeb;border-radius:3px"></div><svg style="left:160px;top:197.0px;" width="12" height="15" viewBox="0 0 12 15">
<path d="M1 1.5 L9 0 L11 1 L11 14 L3 15 L1 13.5 Z" fill="#1c1c1c"/>
<path d="M1 1.5 L3 2.5 L3 15 L1 13.5 Z" fill="#777"/>
<path d="M3 2.5 L11 1" stroke="#555" stroke-width=".8"/>
<rect x="5.5" y="6" width="3" height="5" fill="#2d8de0"/>
</svg><svg style="left:160px;top:219.55px;" width="12" height="15" viewBox="0 0 12 15">
<path d="M1 1.5 L9 0 L11 1 L11 14 L3 15 L1 13.5 Z" fill="#1c1c1c"/>
<path d="M1 1.5 L3 2.5 L3 15 L1 13.5 Z" fill="#777"/>
<path d="M3 2.5 L11 1" stroke="#555" stroke-width=".8"/>
<rect x="5.5" y="6" width="3" height="5" fill="#333"/>
</svg><svg style="left:160px;top:242.1px;" width="12" height="15" viewBox="0 0 12 15">
<path d="M1 1.5 L9 0 L11 1 L11 14 L3 15 L1 13.5 Z" fill="#1c1c1c"/>
<path d="M1 1.5 L3 2.5 L3 15 L1 13.5 Z" fill="#777"/>
<path d="M3 2.5 L11 1" stroke="#555" stroke-width=".8"/>
<rect x="5.5" y="6" width="3" height="5" fill="#2a2a2a"/>
</svg><svg style="left:160px;top:264.65px;" width="12" height="15" viewBox="0 0 12 15">
<path d="M1 1.5 L9 0 L11 1 L11 14 L3 15 L1 13.5 Z" fill="#1c1c1c"/>
<path d="M1 1.5 L3 2.5 L3 15 L1 13.5 Z" fill="#777"/>
<path d="M3 2.5 L11 1" stroke="#555" stroke-width=".8"/>
<rect x="5.5" y="6" width="3" height="5" fill="#333"/>
</svg><svg style="left:160px;top:287.2px;" width="12" height="15" viewBox="0 0 12 15">
<path d="M1 1.5 L9 0 L11 1 L11 14 L3 15 L1 13.5 Z" fill="#1c1c1c"/>
<path d="M1 1.5 L3 2.5 L3 15 L1 13.5 Z" fill="#777"/>
<path d="M3 2.5 L11 1" stroke="#555" stroke-width=".8"/>
<rect x="5.5" y="6" width="3" height="5" fill="#2d8de0"/>
</svg><svg style="left:159px;top:310.25px;" width="44" height="44" viewBox="0 0 44 44"><g transform="scale(0.34)"><defs><linearGradient id="scr1900" x1="0" y1="0" x2="1" y2="1"><stop offset="0" stop-color="#111"/><stop offset=".45" stop-color="#3a3a3a"/><stop offset=".55" stop-color="#1c1c1c"/><stop offset="1" stop-color="#0c0c0c"/></linearGradient></defs><path d="M1 1 L42 10 L40 40 L4 26 Z" fill="url(#scr1900)" stroke="#1a78c8" stroke-width="1.3" stroke-linejoin="round"/><path d="M17 32 L17 36 M22 34 L22 38" stroke="#1f86cf" stroke-width="1.4"/><path d="M22 38 L28 41" stroke="#222" stroke-width="2"/></g></svg><svg style="left:166.5px;top:332.3px;" width="15" height="15" viewBox="0 0 15 15">
<g transform="scale(0.3409090909090909 0.32608695652173914)">
<defs><linearGradient id="dv2825" x1="0" y1="0" x2="0" y2="1"><stop offset="0" stop-color="#0c0c0c"/><stop offset=".45" stop-color="#2a2a2a"/><stop offset=".6" stop-color="#161616"/><stop offset="1" stop-color="#0a0a0a"/></linearGradient></defs>
<path d="M1.5 13 Q1.5 10 4.5 9.5 L37 1.5 Q43 0.5 43 5 L43 37 Q43 42.5 37.5 42 L5 37 Q1.5 36.5 1.5 33 Z" fill="url(#dv2825)"/>
<path d="M36.5 1.7 Q43 0.5 43 5 L43 37 Q43 42.5 37 42 Q40 40 40 36 L40 6 Q40 2.5 36.5 1.7 Z" fill="#1a6fc4"/>
<path d="M1.8 16.5 L38.5 9.5" stroke="#1a6fc4" stroke-width="1.1"/>
<path d="M13.5 14.2 L24 12.2 L24 29 Q19 34 13.5 30 Z" fill="#145ca8"/>
<ellipse cx="19" cy="24" rx="4.2" ry="5" fill="#1c1c1c"/>
<path d="M0.5 41.5 L6.5 32 L25 32.5 L36 44.5 L34 46 L29.5 46 L24 39.5 L8.5 39.5 L3.5 43.5 Z" fill="#1a6ec6"/><path d="M6.5 32 L25 32.5 L27 35 L8 35 Z" fill="#2a8ae0"/>
</g></svg><svg style="left:167px;top:354.85px;" width="42" height="44" viewBox="0 0 42 44"><g transform="scale(0.36)">
<circle cx="30" cy="11" r="9.5" fill="#d0d0d0" stroke="#b8b8b8"/><circle cx="30" cy="11" r="2.5" fill="#f4f4f4" stroke="#999"/>
<path d="M6 16 L36 16 L40 27 L2 27 Z" fill="#dcdcdc"/>
<path d="M2 27 L40 27 L40 38 L2 38 Z" fill="#2a2a2a"/>
<path d="M2 27 L40 27 L40 29 L2 29 Z" fill="#555"/>
<circle cx="7" cy="32" r="1.3" fill="#3ce03c"/>
<rect x="14" y="34" width="24" height="10" rx="1.5" fill="#0d0d0d"/>
<text x="26" y="42" font-family="Liberation Sans" font-size="7" fill="#fff" text-anchor="middle">BD</text>
</g></svg><svg style="left:158.5px;top:377.4px;" width="16" height="15" viewBox="0 0 16 15"><path d="M1 4 L9 1 L15 4 L15 12 L7 15 L1 12 Z" fill="#111"/><path d="M1 4 L7 7 L15 4" stroke="#444" fill="none" stroke-width=".8"/></svg><svg style="left:159px;top:399.95000000000005px;" width="15" height="15" viewBox="0 0 15 15"><circle cx="7.5" cy="7.5" r="6.8" fill="#0e4d90"/><path d="M2 6 Q5 2 8 4 Q10 7 13 5 L14 9 Q10 12 7 10 Q4 9 2 11 Z" fill="#2aa0f0"/><circle cx="7.5" cy="7.5" r="6.8" fill="none" stroke="#123" stroke-width=".8"/></svg><svg style="left:158.5px;top:424.5px;" width="16" height="12" viewBox="0 0 16 12"><rect x="1" y="1" width="14" height="9" rx="1" fill="#141414"/><rect x="3" y="3" width="10" height="4" fill="#1d6fc4"/><rect x="1" y="10" width="14" height="1.5" fill="#333"/></svg><svg style="left:160px;top:445.05px;" width="13" height="15" viewBox="0 0 13 15"><path d="M1 1 L12 1 L11 13 Q6.5 15 2 13 Z" fill="#161616"/><path d="M2 12 Q6.5 14.5 11 12" stroke="#2a8cff" stroke-width="1.8" fill="none"/></svg><svg style="left:160px;top:467.6px;" width="12" height="15" viewBox="0 0 12 15"><path d="M1 1.5 L9 0 L11 1 L11 14 L3 15 L1 13.5 Z" fill="#1c1c1c"/><path d="M1 1.5 L3 2.5 L3 15 L1 13.5 Z" fill="#777"/></svg><svg style="left:160px;top:490.15000000000003px;" width="12" height="15" viewBox="0 0 12 15"><path d="M1 1.5 L9 0 L11 1 L11 14 L3 15 L1 13.5 Z" fill="#1c1c1c"/><path d="M1 1.5 L3 2.5 L3 15 L1 13.5 Z" fill="#777"/></svg><div class="a" style="left:127px;top:192px;width:132px;height:348px;overflow:hidden"></div><div class="a" style="left:0;top:0;width:259px;height:540px;overflow:hidden"><div class="t" style="left:178.9px;top:196.5px;font-size:12px;line-height:14px;color:#1a1a1a;transform:scaleX(0.926);">Downloads</div><div class="t" style="left:178.9px;top:219.1px;font-size:12px;line-height:14px;color:#1a1a1a;transform:scaleX(0.945);">Music</div><div class="t" style="left:178.9px;top:241.6px;font-size:12px;line-height:14px;color:#1a1a1a;transform:scaleX(0.907);">Pictures</div><div class="t" style="left:178.9px;top:264.1px;font-size:12px;line-height:14px;color:#1a1a1a;transform:scaleX(0.960);">Videos</div><div class="t" style="left:179.2px;top:286.7px;font-size:12px;line-height:14px;color:#1a1a1a;transform:scaleX(0.872);">TeamOS</div><div class="t" style="left:179.2px;top:309.2px;font-size:12px;line-height:14px;color:#1a1a1a;transform:scaleX(0.867);">This PC</div><div class="t" style="left:186.7px;top:331.8px;font-size:12px;line-height:14px;color:#1a1a1a;transform:scaleX(0.886);">(C:) Local Disk</div><div class="t" style="left:186.7px;top:354.4px;font-size:12px;line-height:14px;color:#1a1a1a;transform:scaleX(0.895);">(D:) BD-ROM Drive</div><div class="t" style="left:179.0px;top:376.9px;font-size:12px;line-height:14px;color:#1a1a1a;transform:scaleX(0.891);">Libraries</div><div class="t" style="left:179.0px;top:399.5px;font-size:12px;line-height:14px;color:#1a1a1a;transform:scaleX(0.954);">Network</div><div class="t" style="left:179.0px;top:422.0px;font-size:12px;line-height:14px;color:#1a1a1a;transform:scaleX(0.930);">Control Panel</div><div class="t" style="left:179.0px;top:444.6px;font-size:12px;line-height:14px;color:#1a1a1a;transform:scaleX(0.879);">Recycle Bin</div><div class="t" style="left:179.0px;top:467.1px;font-size:12px;line-height:14px;color:#1a1a1a;transform:scaleX(0.899);">Backup</div><div class="t" style="left:179.0px;top:489.7px;font-size:12px;line-height:14px;color:#1a1a1a;transform:scaleX(0.927);">Morph's_Desktop</div></div><div class="a" style="left:274px;top:192px;width:1px;height:348px;background:#e8e8e8"></div><svg style="left:283px;top:206px;" width="11" height="8" viewBox="0 0 11 8"><path d="M1 1.5 L5.5 6 L10 1.5" stroke="#777" stroke-width="1.1" fill="none"/></svg><div class="t" style="left:297.8px;top:201.8px;font-size:14px;line-height:16px;color:#2753a5;transform:scaleX(0.977);">Hard Disk Drives</div><div class="a" style="left:290.5px;top:225px;width:234.5px;height:47.5px;background:#f0f0f0;border-radius:2px"></div><svg style="left:295px;top:226px;" width="42" height="44.5" viewBox="0 0 42 44.5">
<g transform="scale(0.9545454545454546 0.967391304347826)">
<defs><linearGradient id="dv2467" x1="0" y1="0" x2="0" y2="1"><stop offset="0" stop-color="#0c0c0c"/><stop offset=".45" stop-color="#2a2a2a"/><stop offset=".6" stop-color="#161616"/><stop offset="1" stop-color="#0a0a0a"/></linearGradient></defs>
<path d="M1.5 13 Q1.5 10 4.5 9.5 L37 1.5 Q43 0.5 43 5 L43 37 Q43 42.5 37.5 42 L5 37 Q1.5 36.5 1.5 33 Z" fill="url(#dv2467)"/>
<path d="M36.5 1.7 Q43 0.5 43 5 L43 37 Q43 42.5 37 42 Q40 40 40 36 L40 6 Q40 2.5 36.5 1.7 Z" fill="#1a6fc4"/>
<path d="M1.8 16.5 L38.5 9.5" stroke="#1a6fc4" stroke-width="1.1"/>
<path d="M13.5 14.2 L24 12.2 L24 29 Q19 34 13.5 30 Z" fill="#145ca8"/>
<ellipse cx="19" cy="24" rx="4.2" ry="5" fill="#1c1c1c"/>
<path d="M0.5 41.5 L6.5 32 L25 32.5 L36 44.5 L34 46 L29.5 46 L24 39.5 L8.5 39.5 L3.5 43.5 Z" fill="#1a6ec6"/><path d="M6.5 32 L25 32.5 L27 35 L8 35 Z" fill="#2a8ae0"/>
</g></svg><div class="t" style="left:344.3px;top:227.2px;font-size:12px;line-height:14px;color:#1a1a1a;transform:scaleX(0.892);">(C:) Local Disk</div><div class="a" style="left:344px;top:242.5px;width:176.5px;height:11.5px;background:#e2e2e2;border:1px solid #c8c8c8;border-radius:2px"></div><div class="a" style="left:344px;top:242.5px;width:79px;height:11.5px;background:#26a0da"></div><div class="t" style="left:344.3px;top:255.0px;font-size:12px;line-height:14px;color:#3d3d3d;transform:scaleX(0.855);">32.8 GB free of 59.8 GB</div><svg style="left:283px;top:284px;" width="11" height="8" viewBox="0 0 11 8"><path d="M1 1.5 L5.5 6 L10 1.5" stroke="#777" stroke-width="1.1" fill="none"/></svg><div class="t" style="left:297.9px;top:279.9px;font-size:14px;line-height:16px;color:#2753a5;transform:scaleX(0.987);">Devices with Removable Storage</div><svg style="left:296.5px;top:304.5px;" width="42" height="44" viewBox="0 0 42 44"><g transform="scale(0.97)">
<circle cx="30" cy="11" r="9.5" fill="#d0d0d0" stroke="#b8b8b8"/><circle cx="30" cy="11" r="2.5" fill="#f4f4f4" stroke="#999"/>
<path d="M6 16 L36 16 L40 27 L2 27 Z" fill="#dcdcdc"/>
<path d="M2 27 L40 27 L40 38 L2 38 Z" fill="#2a2a2a"/>
<path d="M2 27 L40 27 L40 29 L2 29 Z" fill="#555"/>
<circle cx="7" cy="32" r="1.3" fill="#3ce03c"/>
<rect x="14" y="34" width="24" height="10" rx="1.5" fill="#0d0d0d"/>
<text x="26" y="42" font-family="Liberation Sans" font-size="7" fill="#fff" text-anchor="middle">BD</text>
</g></svg><div class="t" style="left:344.2px;top:311.3px;font-size:12px;line-height:14px;color:#1a1a1a;transform:scaleX(0.895);">(D:) BD-ROM Drive</div><svg style="left:145px;top:543.5px;" width="45.5" height="48" viewBox="0 0 45.5 48">
<g transform="scale(1.0340909090909092 1.0434782608695652)">
<defs><linearGradient id="dv4239" x1="0" y1="0" x2="0" y2="1"><stop offset="0" stop-color="#0c0c0c"/><stop offset=".45" stop-color="#2a2a2a"/><stop offset=".6" stop-color="#161616"/><stop offset="1" stop-color="#0a0a0a"/></linearGradient></defs>
<path d="M1.5 13 Q1.5 10 4.5 9.5 L37 1.5 Q43 0.5 43 5 L43 37 Q43 42.5 37.5 42 L5 37 Q1.5 36.5 1.5 33 Z" fill="url(#dv4239)"/>
<path d="M36.5 1.7 Q43 0.5 43 5 L43 37 Q43 42.5 37 42 Q40 40 40 36 L40 6 Q40 2.5 36.5 1.7 Z" fill="#1a6fc4"/>
<path d="M1.8 16.5 L38.5 9.5" stroke="#1a6fc4" stroke-width="1.1"/>
<path d="M13.5 14.2 L24 12.2 L24 29 Q19 34 13.5 30 Z" fill="#145ca8"/>
<ellipse cx="19" cy="24" rx="4.2" ry="5" fill="#1c1c1c"/>
<path d="M0.5 41.5 L6.5 32 L25 32.5 L36 44.5 L34 46 L29.5 46 L24 39.5 L8.5 39.5 L3.5 43.5 Z" fill="#1a6ec6"/><path d="M6.5 32 L25 32.5 L27 35 L8 35 Z" fill="#2a8ae0"/>
</g></svg><div class="t" style="left:205.3px;top:547.4px;font-size:13px;line-height:15px;color:#1a1a1a;transform:scaleX(0.893);">(C:) Local Disk</div><div class="t" style="left:205.3px;top:565.0px;font-size:12px;line-height:14px;color:#6b6b6b;transform:scaleX(0.889);">Local Disk</div><div class="t" style="left:285.2px;top:547.8px;font-size:12px;line-height:14px;color:#6b6b6b;transform:scaleX(0.862);">Space used:</div><div class="t" style="left:289.8px;top:565.0px;font-size:12px;line-height:14px;color:#6b6b6b;transform:scaleX(0.862);">Space free:</div><div class="a" style="left:354.5px;top:547.5px;width:117px;height:11.5px;background:#e2e2e2;border:1px solid #c8c8c8;border-radius:2px"></div><div class="a" style="left:354.5px;top:547.5px;width:52.5px;height:11.5px;background:#26a0da"></div><div class="t" style="left:353.8px;top:565.0px;font-size:12px;line-height:14px;color:#1a1a1a;transform:scaleX(0.822);">32.8 GB</div><div class="t" style="left:482.6px;top:547.8px;font-size:12px;line-height:14px;color:#6b6b6b;transform:scaleX(0.956);">Total size:</div><div class="t" style="left:473.0px;top:565.0px;font-size:12px;line-height:14px;color:#6b6b6b;transform:scaleX(0.906);">File system:</div><div class="t" style="left:136.3px;top:601.0px;font-size:12px;line-height:14px;color:#1a1a1a;transform:scaleX(0.913);">2 items</div><div class="t" style="left:197.1px;top:601.0px;font-size:12px;line-height:14px;color:#1a1a1a;transform:scaleX(0.904);">1 item selected</div>
<div class="a" style="left:505px;top:176px;width:48px;height:8px;"></div><div class="a" style="left:529px;top:180px;width:340px;height:471px;background:#f3f3f3;border:1px solid #9a9a9a;box-shadow:-6px 4px 20px rgba(0,0,0,.28)"></div><svg style="left:539.5px;top:188.5px;" width="15" height="15" viewBox="0 0 15 15">
<g transform="scale(0.3409090909090909 0.32608695652173914)">
<defs><linearGradient id="dv2938" x1="0" y1="0" x2="0" y2="1"><stop offset="0" stop-color="#0c0c0c"/><stop offset=".45" stop-color="#2a2a2a"/><stop offset=".6" stop-color="#161616"/><stop offset="1" stop-color="#0a0a0a"/></linearGradient></defs>
<path d="M1.5 13 Q1.5 10 4.5 9.5 L37 1.5 Q43 0.5 43 5 L43 37 Q43 42.5 37.5 42 L5 37 Q1.5 36.5 1.5 33 Z" fill="url(#dv2938)"/>
<path d="M36.5 1.7 Q43 0.5 43 5 L43 37 Q43 42.5 37 42 Q40 40 40 36 L40 6 Q40 2.5 36.5 1.7 Z" fill="#1a6fc4"/>
<path d="M1.8 16.5 L38.5 9.5" stroke="#1a6fc4" stroke-width="1.1"/>
<path d="M13.5 14.2 L24 12.2 L24 29 Q19 34 13.5 30 Z" fill="#145ca8"/>
<ellipse cx="19" cy="24" rx="4.2" ry="5" fill="#1c1c1c"/>
<path d="M0.5 41.5 L6.5 32 L25 32.5 L36 44.5 L34 46 L29.5 46 L24 39.5 L8.5 39.5 L3.5 43.5 Z" fill="#1a6ec6"/><path d="M6.5 32 L25 32.5 L27 35 L8 35 Z" fill="#2a8ae0"/>
</g></svg><div class="t" style="left:559.8px;top:189.9px;font-size:12px;line-height:14px;color:#1a1a1a;transform:scaleX(0.897);">(C:) Local Disk Properties</div><svg style="left:849px;top:191.5px;" width="11" height="11" viewBox="0 0 11 11"><path d="M0.5 0.5 L10.5 10.5 M10.5 0.5 L0.5 10.5" stroke="#222" stroke-width="1.1"/></svg><div class="a" style="left:537px;top:217px;width:95.5px;height:20px;background:#f0f0f0;border:1px solid #dcdcdc;border-bottom:none;border-radius:3px 3px 0 0"></div><div class="a" style="left:632px;top:217px;width:139.5px;height:20px;background:#f0f0f0;border:1px solid #dcdcdc;border-bottom:none;border-radius:3px 3px 0 0"></div><div class="a" style="left:771px;top:217px;width:90px;height:20px;background:#f0f0f0;border:1px solid #dcdcdc;border-bottom:none;border-radius:3px 3px 0 0"></div><div class="a" style="left:618px;top:236.5px;width:73px;height:19px;background:#f0f0f0;border:1px solid #dcdcdc;border-bottom:none;border-radius:3px 3px 0 0"></div><div class="a" style="left:691px;top:236.5px;width:89.5px;height:19px;background:#f0f0f0;border:1px solid #dcdcdc;border-bottom:none;border-radius:3px 3px 0 0"></div><div class="a" style="left:780px;top:236.5px;width:81px;height:19px;background:#f0f0f0;border:1px solid #dcdcdc;border-bottom:none;border-radius:3px 3px 0 0"></div><div class="a" style="left:536px;top:254.5px;width:326px;height:362px;background:#f9f9f9;border:1px solid #dcdcdc;border-radius:3px"></div><div class="a" style="left:535.5px;top:234px;width:83px;height:22px;background:#f9f9f9;border:1px solid #dcdcdc;border-bottom:none;border-radius:3px 3px 0 0"></div><div class="t" style="left:567.2px;top:220.7px;font-size:11.5px;line-height:12px;color:#1a1a1a;transform:scaleX(0.833);">Security</div><div class="t" style="left:663.7px;top:220.7px;font-size:11.5px;line-height:12px;color:#1a1a1a;transform:scaleX(0.847);">Previous Versions</div><div class="t" style="left:801.9px;top:220.7px;font-size:11.5px;line-height:12px;color:#1a1a1a;transform:scaleX(0.862);">Quota</div><div class="t" style="left:558.9px;top:238.1px;font-size:11.5px;line-height:12px;color:#1a1a1a;transform:scaleX(0.843);">General</div><div class="t" style="left:640.6px;top:239.4px;font-size:11.5px;line-height:12px;color:#1a1a1a;transform:scaleX(0.860);">Tools</div><div class="t" style="left:714.2px;top:239.4px;font-size:11.5px;line-height:12px;color:#1a1a1a;transform:scaleX(0.848);">Hardware</div><div class="t" style="left:803.2px;top:239.4px;font-size:11.5px;line-height:12px;color:#1a1a1a;transform:scaleX(0.838);">Sharing</div><svg style="left:549.5px;top:267px;" width="28.5" height="30.5" viewBox="0 0 28.5 30.5">
<g transform="scale(0.6477272727272727 0.6630434782608695)">
<defs><linearGradient id="dv3517" x1="0" y1="0" x2="0" y2="1"><stop offset="0" stop-color="#0c0c0c"/><stop offset=".45" stop-color="#2a2a2a"/><stop offset=".6" stop-color="#161616"/><stop offset="1" stop-color="#0a0a0a"/></linearGradient></defs>
<path d="M1.5 13 Q1.5 10 4.5 9.5 L37 1.5 Q43 0.5 43 5 L43 37 Q43 42.5 37.5 42 L5 37 Q1.5 36.5 1.5 33 Z" fill="url(#dv3517)"/>
<path d="M36.5 1.7 Q43 0.5 43 5 L43 37 Q43 42.5 37 42 Q40 40 40 36 L40 6 Q40 2.5 36.5 1.7 Z" fill="#1a6fc4"/>
<path d="M1.8 16.5 L38.5 9.5" stroke="#1a6fc4" stroke-width="1.1"/>
<path d="M13.5 14.2 L24 12.2 L24 29 Q19 34 13.5 30 Z" fill="#145ca8"/>
<ellipse cx="19" cy="24" rx="4.2" ry="5" fill="#1c1c1c"/>
<path d="M0.5 41.5 L6.5 32 L25 32.5 L36 44.5 L34 46 L29.5 46 L24 39.5 L8.5 39.5 L3.5 43.5 Z" fill="#1a6ec6"/><path d="M6.5 32 L25 32.5 L27 35 L8 35 Z" fill="#2a8ae0"/>
</g></svg><div class="a" style="left:617px;top:273.5px;width:231px;height:21.5px;background:#fff;border:1px solid #d0d0d0;border-bottom:2px solid #0f6cbd;border-radius:3px"></div><div class="a" style="left:620px;top:277.5px;width:1px;height:13px;background:#000"></div><div class="a" style="left:549px;top:305px;width:298.5px;height:1px;background:#c9c9c9"></div><div class="t" style="left:549.0px;top:315.0px;font-size:11.5px;line-height:12px;color:#1a1a1a;transform:scaleX(0.882);">Type:</div><div class="t" style="left:617.5px;top:315.0px;font-size:11.5px;line-height:12px;color:#1a1a1a;transform:scaleX(0.865);">Local Disk</div><div class="t" style="left:549.0px;top:334.6px;font-size:11.5px;line-height:12px;color:#1a1a1a;transform:scaleX(0.812);">File system:</div><div class="t" style="left:617.5px;top:334.6px;font-size:11.5px;line-height:12px;color:#1a1a1a;transform:scaleX(0.843);">NTFS</div><div class="a" style="left:549px;top:354px;width:298.5px;height:1px;background:#c9c9c9"></div><div class="a" style="left:549px;top:362px;width:14px;height:13.5px;background:#26a0da"></div><div class="t" style="left:569.0px;top:362.2px;font-size:11.5px;line-height:12px;color:#1a1a1a;transform:scaleX(0.870);">Used space:</div><div class="t" style="left:686.0px;top:362.2px;font-size:11.5px;line-height:12px;color:#1a1a1a;transform:scaleX(0.886);">29,011,689,472</div><div class="t" style="left:758.7px;top:362.2px;font-size:11.5px;line-height:12px;color:#1a1a1a;transform:scaleX(0.855);">bytes</div><div class="t" style="left:805.0px;top:362.2px;font-size:11.5px;line-height:12px;color:#1a1a1a;transform:scaleX(0.863);">27.0 GB</div><div class="a" style="left:549px;top:381.5px;width:14px;height:13.5px;background:#a8a8a8"></div><div class="t" style="left:569.0px;top:381.8px;font-size:11.5px;line-height:12px;color:#1a1a1a;transform:scaleX(0.846);">Free space:</div><div class="t" style="left:686.0px;top:381.8px;font-size:11.5px;line-height:12px;color:#1a1a1a;transform:scaleX(0.877);">35,305,861,120</div><div class="t" style="left:758.7px;top:381.8px;font-size:11.5px;line-height:12px;color:#1a1a1a;transform:scaleX(0.855);">bytes</div><div class="t" style="left:805.0px;top:381.8px;font-size:11.5px;line-height:12px;color:#1a1a1a;transform:scaleX(0.863);">32.8 GB</div><div class="a" style="left:549px;top:405px;width:298.5px;height:1px;background:#c9c9c9"></div><div class="t" style="left:568.2px;top:414.0px;font-size:11.5px;line-height:12px;color:#1a1a1a;transform:scaleX(0.857);">Capacity:</div><div class="t" style="left:686.0px;top:414.0px;font-size:11.5px;line-height:12px;color:#1a1a1a;transform:scaleX(0.877);">64,317,550,592</div><div class="t" style="left:758.7px;top:414.0px;font-size:11.5px;line-height:12px;color:#1a1a1a;transform:scaleX(0.855);">bytes</div><div class="t" style="left:805.0px;top:414.0px;font-size:11.5px;line-height:12px;color:#1a1a1a;transform:scaleX(0.863);">59.8 GB</div><svg style="left:668.1px;top:430.8px;" width="60" height="60" viewBox="0 0 60 60"><circle cx="30" cy="30" r="16" fill="#fff"/><circle cx="30" cy="30" r="21.25" fill="none" stroke="#a8a8a8" stroke-width="10.5"/><path d="M8.75 30 A21.25 21.25 0 0 1 49.96846819170055 22.73207195432954" fill="none" stroke="#26a0da" stroke-width="10.5"/></svg><div class="t" style="left:681.5px;top:500.4px;font-size:11.5px;line-height:12px;color:#1a1a1a;transform:scaleX(0.838);">Drive C:</div><div class="a" style="left:773.5px;top:492.5px;width:74px;height:19px;background:#fdfdfd;border:1px solid #cfcfcf;border-radius:3px;border-bottom-color:#b8b8b8"></div><div class="t" style="left:795.6px;top:495.9px;font-size:11.5px;line-height:12px;color:#1a1a1a;transform:scaleX(0.836);">Details</div><div class="a" style="left:549px;top:518px;width:298.5px;height:1px;background:#c9c9c9"></div><div class="a" style="left:549.5px;top:550px;width:11.5px;height:11px;background:#fdfdfd;border:1px solid #8a8a8a;border-radius:2px"></div><div class="t" style="left:563.6px;top:548.6px;font-size:11.5px;line-height:12px;color:#1a1a1a;transform:scaleX(0.859);">Compress this drive to save disk space</div><div class="a" style="left:549.5px;top:570.5px;width:11.5px;height:11.5px;background:#0f6cbd;border-radius:2px"></div><svg style="left:550px;top:571px;" width="11" height="11" viewBox="0 0 11 11"><path d="M2.5 5.8 L4.6 8 L8.8 3.2" stroke="#fff" stroke-width="1.2" fill="none"/></svg><div class="t" style="left:563.6px;top:569.3px;font-size:11.5px;line-height:12px;color:#1a1a1a;transform:scaleX(0.868);">Allow files on this drive to have contents indexed in addition to</div><div class="t" style="left:563.6px;top:581.1px;font-size:11.5px;line-height:12px;color:#1a1a1a;transform:scaleX(0.839);">file properties</div><div class="a" style="left:641px;top:624.5px;width:68px;height:19.5px;background:#fdfdfd;border:1px solid #0f6cbd;border-radius:4px"></div><div class="t" style="left:667.4px;top:628.0px;font-size:11.5px;line-height:12px;color:#1a1a1a;transform:scaleX(0.909);">OK</div><div class="a" style="left:717px;top:624.5px;width:68px;height:19.5px;background:#fdfdfd;border:1px solid #cfcfcf;border-bottom-color:#b8b8b8;border-radius:4px"></div><div class="t" style="left:735.3px;top:628.0px;font-size:11.5px;line-height:12px;color:#1a1a1a;transform:scaleX(0.869);">Cancel</div><div class="a" style="left:793.5px;top:624.5px;width:68px;height:19.5px;background:#f9f9f9;border:1px solid #e2e2e2;border-radius:4px"></div><div class="t" style="left:814.2px;top:628.0px;font-size:11.5px;line-height:12px;color:#9d9d9d;transform:scaleX(0.872);">Apply</div>
<div class="a" style="left:0px;top:679px;width:965px;height:32px;background:#bebebe;border-top:1px solid #d0d0d0;border-left:2px solid #d8d8d8"></div><svg style="left:14px;top:687px;" width="24" height="22" viewBox="0 0 24 22">
<defs><radialGradient id="moon" cx="35%" cy="30%" r="70%"><stop offset="0" stop-color="#e2e6ec"/><stop offset="1" stop-color="#8a94a2"/></radialGradient></defs>
<circle cx="10" cy="10" r="9.5" fill="url(#moon)"/>
<path d="M9 18 Q9 14 13 14 Q14 11 17 12 Q21 12 21 16 Q23 17 22 19 Q21 20 19 20 L11 20 Q9 20 9 18 Z" fill="#fafafa"/></svg><svg style="left:391.5px;top:680px;" width="38" height="31" viewBox="0 0 38 31">
<defs><radialGradient id="al" cx="40%" cy="25%" r="75%"><stop offset="0" stop-color="#c8ecff"/><stop offset=".35" stop-color="#45b4f8"/><stop offset="1" stop-color="#1a70d0"/></radialGradient>
<radialGradient id="alr" cx="50%" cy="50%" r="50%"><stop offset=".7" stop-color="#0c0c0c"/><stop offset=".9" stop-color="#3a3a3a"/><stop offset="1" stop-color="#9aa8b8"/></radialGradient></defs>
<circle cx="19" cy="19" r="18.5" fill="url(#alr)"/>
<path d="M19 4.5 C26 4.5 30 10 29 17 C28 24 23 31 19 31 C15 31 10 24 9 17 C8 10 12 4.5 19 4.5 Z" fill="url(#al)"/>
<path d="M10.5 17.5 Q15 17 17 21.5 Q12.5 22.5 10.5 17.5 Z M27.5 17.5 Q23 17 21 21.5 Q25.5 22.5 27.5 17.5 Z" fill="#061426"/></svg><div class="a" style="left:439px;top:681px;width:40px;height:30px;background:#d3d3d3;border-left:1px solid #e6e6e6;border-right:1px solid #e6e6e6"></div><div class="a" style="left:482px;top:682px;width:2px;height:29px;background:#e8e8e8;border-right:1px solid #9a9a9a"></div><svg style="left:446px;top:688px;" width="26" height="23" viewBox="0 0 26 23">
<path d="M1 1.5 Q1 0.5 2 0.5 L9 0.5 L11 3 L24 3 Q25 3 25 4 L25 22 L1 22 Z" fill="#e9a81a"/>
<path d="M1 5 L25 5 L25 22 L1 22 Z" fill="#fcd24c"/>
<path d="M5.5 15.5 Q5.5 14 7 14 L19 14 Q20.5 14 20.5 15.5 L20.5 23 L5.5 23 Z" fill="#1f7fd8"/>
<path d="M8.5 17.5 L17.5 17.5" stroke="#0f5aa8" stroke-width="1"/></svg><svg style="left:496.5px;top:686px;" width="23" height="23" viewBox="0 0 23 23">
<defs>
<linearGradient id="et5533" x1="0" y1="0" x2="1" y2=".7"><stop offset="0" stop-color="#2aa8ec"/><stop offset=".55" stop-color="#2cbcc8"/><stop offset="1" stop-color="#52c746"/></linearGradient>
<linearGradient id="eb5533" x1="0" y1="0" x2=".6" y2="1"><stop offset="0" stop-color="#1f9ae6"/><stop offset="1" stop-color="#0f66c0"/></linearGradient>
<clipPath id="ec5533"><circle cx="24" cy="24" r="23"/></clipPath>
</defs>
<g transform="scale(0.4791666666666667)"><g clip-path="url(#ec5533)">
<rect x="0" y="0" width="48" height="48" fill="url(#et5533)"/>
<path d="M0 29 C2 16 16 11 26 15 C32 18 34 24 32 28 L48 31 L48 48 L0 48 Z" fill="url(#eb5533)"/>
<path d="M16 48 C10 38 12 25 21 20 C26 18 31 21 32 26 L48 31 L48 48 Z" fill="#1458a8"/>
<path d="M22.5 18.5 C27.5 18.5 31 22 31 26 C31 29 34 31 38 31 L48 30.5 L48 36 L38 36.5 C26 37 15.5 33 15.5 26 C15.5 21.5 18.5 18.5 22.5 18.5 Z" fill="#c4c4c4"/>
</g></g></svg><svg style="left:543.5px;top:687.5px;" width="23" height="23" viewBox="0 0 23 23">
<defs><linearGradient id="stb" x1="0" y1="0" x2="0" y2="1"><stop offset="0" stop-color="#2060b0"/><stop offset="1" stop-color="#1a3f80"/></linearGradient></defs>
<path d="M6.5 5 L7 1.5 Q7 0.8 8 0.8 L16 0.8 Q17 0.8 17 1.5 L17.5 5" fill="none" stroke="#38b0f0" stroke-width="1.6"/>
<rect x="0.5" y="4" width="22" height="18" rx="2.5" fill="url(#stb)"/>
<rect x="7" y="9" width="4.3" height="4.3" fill="#f25022"/><rect x="12.2" y="9" width="4.3" height="4.3" fill="#7fba00"/>
<rect x="7" y="14.2" width="4.3" height="4.3" fill="#00a4ef"/><rect x="12.2" y="14.2" width="4.3" height="4.3" fill="#ffb900"/></svg><svg style="left:812px;top:693px;" width="10" height="6" viewBox="0 0 10 6"><path d="M1 5 L5 1 L9 5" stroke="#333" stroke-width="1" fill="none"/></svg><svg style="left:832px;top:689px;" width="16" height="15" viewBox="0 0 16 15"><path d="M1 5 L4 5 L8 2 L8 12 L4 9 L1 9 Z" fill="none" stroke="#222" stroke-width="1.1"/><circle cx="11" cy="10.5" r="4" fill="#111"/><path d="M9.3 8.8 L12.7 12.2 M12.7 8.8 L9.3 12.2" stroke="#eee" stroke-width="1"/></svg><svg style="left:854px;top:689px;" width="16" height="16" viewBox="0 0 16 16"><rect x="1" y="2" width="10" height="9" fill="none" stroke="#222" stroke-width="1.1"/><path d="M4 14 L8 14 M6 11 L6 14" stroke="#222" stroke-width="1.1"/><rect x="11.5" y="1" width="3.5" height="4" fill="none" stroke="#222" stroke-width=".9"/><path d="M13 5 L13 13 L11 13" stroke="#222" stroke-width=".9" fill="none"/></svg><svg style="left:876px;top:690px;" width="17" height="15" viewBox="0 0 17 15"><path d="M3 11 Q0 11 0.8 8 Q1.5 5 4.5 5.5 Q6 1.5 10 2 Q14 2.5 14 6.5 Q16.5 7 16 9.5 Q15.5 11.5 13 11.5 Z" fill="none" stroke="#222" stroke-width="1.1"/><path d="M2 1 L14 14" stroke="#222" stroke-width="1.1"/></svg><div class="t" style="left:907.0px;top:685.5px;font-size:10px;line-height:11px;color:#1a1a1a;transform:scaleX(0.940);">3:20 PM</div><div class="t" style="left:901.0px;top:700.5px;font-size:10px;line-height:11px;color:#1a1a1a;transform:scaleX(0.986);">11/15/2025</div></body></html>
